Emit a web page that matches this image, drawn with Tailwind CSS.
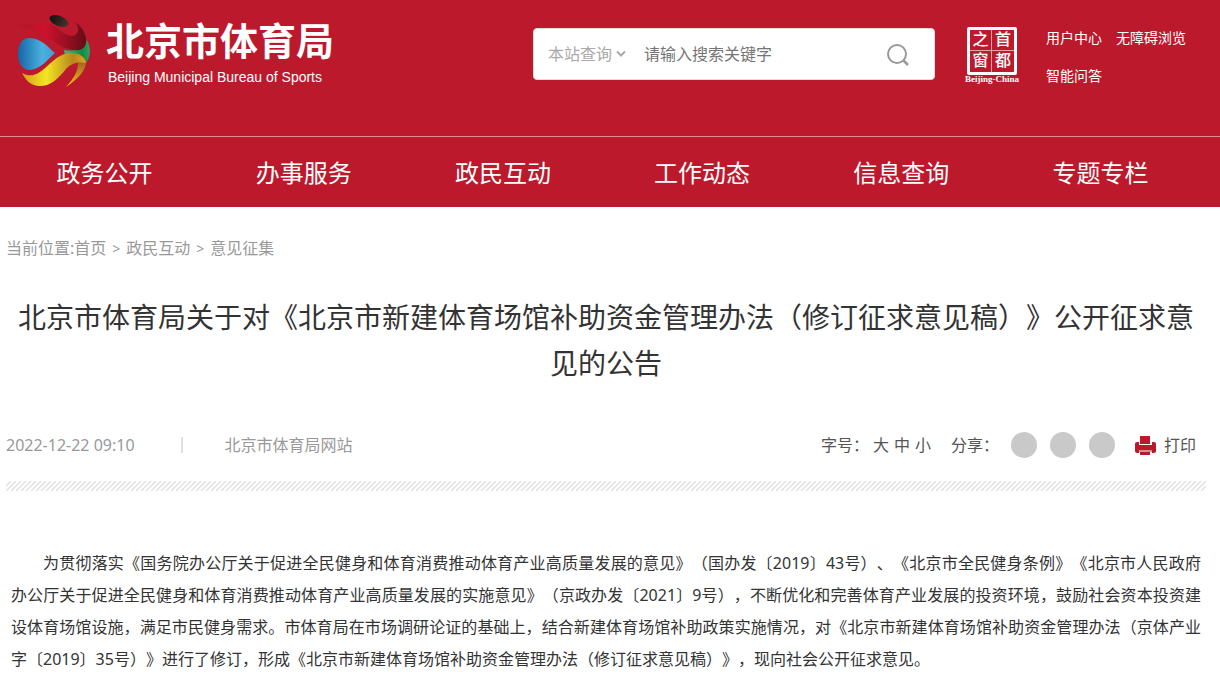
<!DOCTYPE html>
<html lang="zh-CN">

<head>
    <meta charset="UTF-8">
    <meta name="viewport" content="width=device-width, initial-scale=1.0">
    <script src="https://cdn.jsdelivr.net/npm/@tailwindcss/browser@4"></script>
    <title>北京市体育局</title>
</head>

<body class="bg-white overflow-x-hidden font-['Noto_Sans','Noto_Sans_CJK_SC',sans-serif] text-base text-[#333]">
    <!-- Header -->
    <header class="bg-[#bc1a2c] text-white">
        <div class="flex items-start h-34 pl-3 pr-8">
            <a href="#" class="flex items-start pt-3 shrink-0">
                <svg class="w-20 h-20" viewBox="0 0 80 80" aria-hidden="true">
                    <defs>
                        <linearGradient id="red" x1="0" x2="1">
                            <stop offset="0" stop-color="#bc1a2c" />
                            <stop offset=".2" stop-color="#b5172a" />
                            <stop offset=".45" stop-color="#cf102d" />
                            <stop offset=".7" stop-color="#a01023" />
                            <stop offset="1" stop-color="#640c16" />
                        </linearGradient>
                        <linearGradient id="blue" x1="0" x2="1">
                            <stop offset="0" stop-color="#1565a5" />
                            <stop offset=".65" stop-color="#4ab0de" />
                            <stop offset="1" stop-color="#3c9fd2" />
                        </linearGradient>
                        <linearGradient id="gold" x1="0" x2="1">
                            <stop offset="0" stop-color="#d89b1c" />
                            <stop offset=".38" stop-color="#f3e622" />
                            <stop offset=".8" stop-color="#b8851f" />
                            <stop offset="1" stop-color="#e0a51d" />
                        </linearGradient>
                        <linearGradient id="green" x1="0" x2="1">
                            <stop offset="0" stop-color="#4db87c" />
                            <stop offset=".7" stop-color="#118a41" />
                            <stop offset="1" stop-color="#2ea562" />
                        </linearGradient>
                        <linearGradient id="tail" x1="0" x2="0" y1="0" y2="1">
                            <stop offset="0" stop-color="#9c5a20" />
                            <stop offset="1" stop-color="#f5c21b" />
                        </linearGradient>
                        <linearGradient id="cap" x1="0" x2="1">
                            <stop offset="0" stop-color="#14100f" />
                            <stop offset="1" stop-color="#49352e" />
                        </linearGradient>
                    </defs>
                    <path d="M52 38 C61 40 71 37 75 28 C79 36 79 44 74 51 C68 43 60 41 53 43 Z" fill="url(#green)" />
                    <path d="M-1 10 C12 14 24 9 38 12 C46 15 52 24 60 24 C67 23 68 16 63 10 C71 15 75 24 74 31 C73 38 65 40 57 37 C45 34 38 26 26 21 C16 17 7 14 -1 10 Z" fill="url(#red)" />
                    <path d="M43 41 C36 35 29 26 17 26 C9 26 6 34 6 42 C6 51 10 58 18 58 C29 57 36 47 43 41 Z" fill="url(#blue)" />
                    <path d="M74 48 C75 58 66 67 54 75 C61 67 66 60 66 51 Z" fill="url(#tail)" />
                    <path d="M10 61 C28 71 37 46 53 42 C63 39 73 43 74 51 C67 50 61 50 54 57 C45 68 38 74 28 74 C18 74 13 67 10 61 Z" fill="url(#gold)" />
                    <ellipse cx="47" cy="9" rx="10" ry="5" transform="rotate(22 47 9)" fill="url(#cap)" />
                </svg>
                <div class="ml-3.5">
                    <p class="text-[38px] leading-[54px] font-bold font-['Noto_Sans_CJK_SC',sans-serif]">北京市体育局</p>
                    <p class="pl-0.5 text-sm leading-[22px] font-['Liberation_Sans',sans-serif]">Beijing Municipal Bureau of Sports</p>
                </div>
            </a>

            <!-- Search -->
            <form class="flex items-center w-[402px] h-13 mt-7 ml-auto shrink-0 rounded bg-white text-[#757575] border border-[#ddd]">
                <div class="relative flex items-center">
                    <select aria-label="查询范围" class="appearance-none w-24 pl-3.5 bg-white text-[#aaa] outline-none">
                        <option>本站查询</option>
                        <option>全网查询</option>
                    </select>
                    <svg class="absolute right-1 w-2.5 h-2.5 pointer-events-none" viewBox="0 0 10 10" fill="none" stroke="#aaa" stroke-width="2">
                        <path d="M1 2.5 L5 6.5 L9 2.5" />
                    </svg>
                </div>
                <input type="text" aria-label="搜索关键字" placeholder="请输入搜索关键字" class="flex-1 min-w-0 ml-3.5 outline-none placeholder:text-[#757575]">
                <button type="button" aria-label="搜索" class="mr-6">
                    <svg class="w-6 h-6" viewBox="0 0 24 24" fill="none" stroke="#999" stroke-width="2">
                        <circle cx="11" cy="12" r="9" />
                        <path d="M17 18 L22 23" stroke-width="2.5" />
                    </svg>
                </button>
            </form>

            <!-- Capital window seal -->
            <a href="#" class="flex flex-col items-center w-14 mt-[27px] ml-[29px] shrink-0 font-['Liberation_Serif','Noto_Sans_CJK_SC',serif]">
                <span class="grid grid-cols-2 grid-rows-2 w-[50px] h-12 rounded-xs border-3 border-white text-center text-base leading-5 font-medium">
                    <span class="border-r border-b border-white/60">之</span>
                    <span class="border-b border-white/60">首</span>
                    <span class="border-r border-white/60">窗</span>
                    <span>都</span>
                </span>
                <span class="text-[9px] leading-2 font-bold whitespace-nowrap">Beijing-China</span>
            </a>

            <div class="grid grid-cols-[auto_auto] gap-x-3.5 gap-y-4 w-fit mt-[27px] mr-0.5 ml-[26px] shrink-0 text-sm leading-[22px]">
                <a href="#">用户中心</a>
                <a href="#">无障碍浏览</a>
                <a href="#">智能问答</a>
            </div>
        </div>

        <!-- Navigation Bar -->
        <nav class="grid grid-cols-6 h-[71px] pl-[5px] pr-5 border-t border-white/50 text-2xl leading-[71px] text-center">
            <a href="#">政务公开</a>
            <a href="#">办事服务</a>
            <a href="#">政民互动</a>
            <a href="#">工作动态</a>
            <a href="#">信息查询</a>
            <a href="#">专题专栏</a>
        </nav>
    </header>

    <!-- Main Content -->
    <main class="pl-1.5 pr-3.5">
        <div class="pt-[27px] leading-7 text-[#999]">
            当前位置:<a href="#">首页</a><span class="mx-1.5 text-sm">&gt;</span><a href="#">政民互动</a><span class="mx-1.5 text-sm">&gt;</span><a href="#">意见征集</a>
        </div>

        <h1 class="mt-8 text-[28px] leading-[46px] text-center [text-spacing-trim:space-all]">北京市体育局关于对《北京市新建体育场馆补助资金管理办法（修订征求意见稿）》公开征求意见的公告</h1>

        <div class="flex items-center justify-between mt-[45px] h-7 text-[#999]">
            <div class="flex items-center">
                <time>2022-12-22 09:10</time>
                <span class="w-0.5 h-4 ml-[46px] bg-[#e0e0e0]"></span>
                <span class="ml-[42px]">北京市体育局网站</span>
            </div>
            <div class="flex items-center text-[#555]">
                <span>字号：</span>
                <div class="flex gap-[5px] ml-1">
                    <button type="button">大</button>
                    <button type="button">中</button>
                    <button type="button">小</button>
                </div>
                <span class="ml-5">分享：</span>
                <div class="flex gap-[13px] ml-3">
                    <a href="#" aria-label="微信" class="w-6.5 h-6.5 rounded-full bg-[#c9c9c9]"></a>
                    <a href="#" aria-label="微博" class="w-6.5 h-6.5 rounded-full bg-[#c9c9c9]"></a>
                    <a href="#" aria-label="空间" class="w-6.5 h-6.5 rounded-full bg-[#c9c9c9]"></a>
                </div>
                <button type="button" class="flex items-center gap-2 ml-5 mr-2.5">
                    <svg class="w-[21px] h-5" viewBox="0 0 21 20" fill="#bc1a2c" aria-hidden="true">
                        <path d="M5 1 H15 V9 H5 Z" />
                        <path d="M2 7 H4 V10 H17 V7 H19 Q21 7 21 9 V16 Q21 18 19 18 H17 V15 H4 V18 H2 Q0 18 0 16 V9 Q0 7 2 7 Z" />
                        <path d="M4 15 H17 V17 H4 Z" opacity=".5" />
                        <path d="M5 17 H15 V20 H5 Z" />
                    </svg>
                    打印
                </button>
            </div>
        </div>

        <svg class="block w-full h-2.5 mt-[22px]" aria-hidden="true">
            <defs>
                <pattern id="stripes" width="5" height="10" patternUnits="userSpaceOnUse">
                    <path d="M-5 10 L5 0 M0 10 L10 0 M-10 10 L0 0" stroke="#e0e0e0" stroke-width="1.5" />
                </pattern>
            </defs>
            <rect width="100%" height="10" fill="url(#stripes)" />
        </svg>

        <article class="mt-14 px-[5px] leading-8 text-justify indent-8 [text-spacing-trim:space-all]">
            <p>为贯彻落实《国务院办公厅关于促进全民健身和体育消费推动体育产业高质量发展的意见》（国办发〔2019〕43号）、《北京市全民健身条例》《北京市人民政府办公厅关于促进全民健身和体育消费推动体育产业高质量发展的实施意见》（京政办发〔2021〕9号），不断优化和完善体育产业发展的投资环境，鼓励社会资本投资建设体育场馆设施，满足市民健身需求。市体育局在市场调研论证的基础上，结合新建体育场馆补助政策实施情况，对《北京市新建体育场馆补助资金管理办法（京体产业字〔2019〕35号）》进行了修订，形成《北京市新建体育场馆补助资金管理办法（修订征求意见稿）》，现向社会公开征求意见。</p>
        </article>
    </main>
</body>

</html>
